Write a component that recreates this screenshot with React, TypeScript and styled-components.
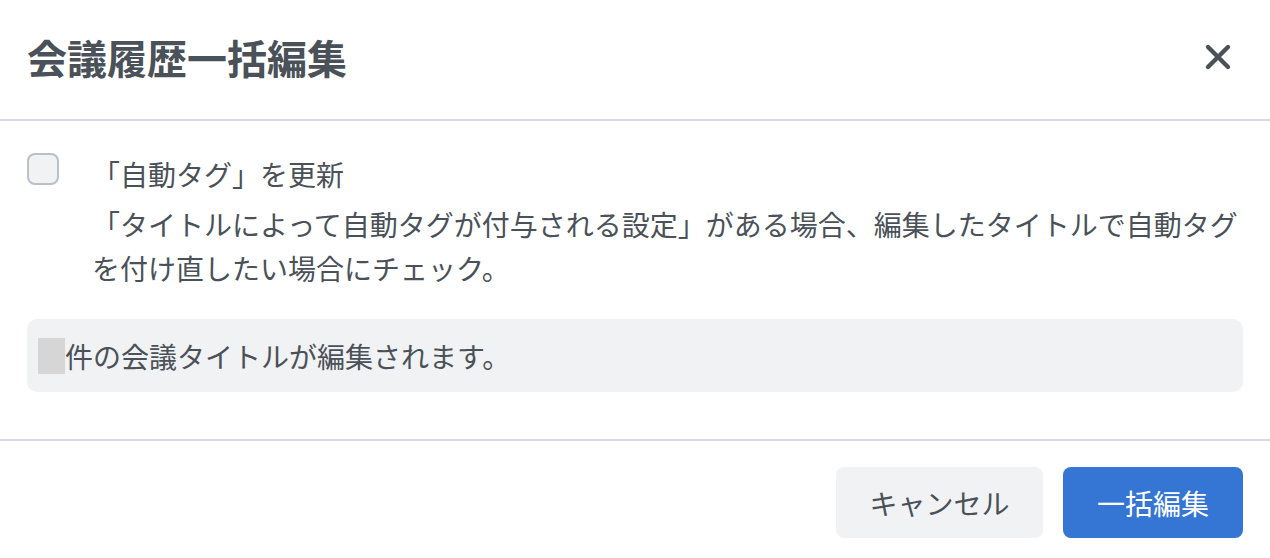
import React, { FunctionComponent, useState } from "react";
import styled, { createGlobalStyle } from "styled-components";

type TSProps = {
    count?: number | null
}

const BulkEditModal: FunctionComponent<TSProps> = (props) => {
    const [checked, setChecked] = useState(false);

    return (
        <Modal>
            <Header>
                <Title>会議履歴一括編集</Title>
                <Close aria-label="close">
                    <svg width="28" height="28" viewBox="0 0 28 28">
                        <path d="M4 4 L24 24 M24 4 L4 24" stroke="#4a5158" strokeWidth="4.4" strokeLinecap="round" />
                    </svg>
                </Close>
            </Header>
            <Body>
                <OptionRow>
                    <CheckBox $checked={checked} onClick={() => setChecked(!checked)} />
                    <OptionText>
                        <Label>「自動タグ」を更新</Label>
                        <Description>
                            「タイトルによって自動タグが付与される設定」がある場合、編集したタイトルで自動タグを付け直したい場合にチェック。
                        </Description>
                    </OptionText>
                </OptionRow>
                <Info>
                    <CountPlaceholder>{props.count ?? ''}</CountPlaceholder>
                    件の会議タイトルが編集されます。
                </Info>
            </Body>
            <Footer>
                <Button $variant="secondary">キャンセル</Button>
                <Button $variant="primary">一括編集</Button>
            </Footer>
        </Modal>
    )
}

export default function App() {
    return (
        <>
            <GlobalStyle />
            <BulkEditModal />
        </>
    )
}

// STYLED COMPONENTS //
const GlobalStyle = createGlobalStyle`
    html, body {
        margin: 0;
        padding: 0;
        background: #fff;
    }
    body {
        font-family: "Noto Sans CJK JP", "Noto Sans", sans-serif;
        color: #4a5158;
    }
`;
const Modal = styled.div({
    width: 1270,
    height: 558,
    background: '#fff',
    display: 'flex',
    flexDirection: 'column',
    boxSizing: 'border-box',
});
const Header = styled.div({
    height: 121,
    boxSizing: 'border-box',
    padding: '0 38px 6px 27px',
    display: 'flex',
    alignItems: 'center',
    justifyContent: 'space-between',
    borderBottom: '2px solid #d7dade',
});
const Title = styled.h1({
    margin: 0,
    fontSize: 40,
    fontWeight: 700,
    lineHeight: '48px',
    color: '#4a5158',
});
const Close = styled.button({
    border: 'none',
    background: 'none',
    padding: 0,
    width: 28,
    height: 28,
    display: 'flex',
    alignItems: 'center',
    justifyContent: 'center',
    cursor: 'pointer',
});
const Body = styled.div({
    padding: '31px 27px 47px',
    display: 'flex',
    flexDirection: 'column',
    borderBottom: '2px solid #d7dade',
});
const OptionRow = styled.div({
    display: 'flex',
    alignItems: 'flex-start',
    gap: 33,
});
const CheckBox = styled.div<{ $checked: boolean }>((props) => ({
    width: 32,
    height: 32,
    boxSizing: 'border-box',
    flexShrink: 0,
    marginTop: 1,
    borderRadius: 8,
    border: '2px solid ' + (props.$checked ? '#3575d3' : '#b9c0c7'),
    background: props.$checked ? '#3575d3' : '#f1f2f4',
    cursor: 'pointer',
}));
const OptionText = styled.div({
    display: 'flex',
    flexDirection: 'column',
    flex: 1,
});
const Label = styled.div({
    fontSize: 28,
    lineHeight: '44px',
    marginBottom: 6,
});
const Description = styled.div({
    fontSize: 28,
    lineHeight: '44px',
});
const Info = styled.div({
    marginTop: 29,
    height: 73,
    boxSizing: 'border-box',
    padding: '0 11px',
    borderRadius: 10,
    background: '#f1f2f4',
    display: 'flex',
    alignItems: 'center',
    fontSize: 28,
});
const CountPlaceholder = styled.span({
    display: 'inline-block',
    minWidth: 27,
    height: 36,
    background: '#d6d6d6',
});
const Footer = styled.div({
    flex: 1,
    display: 'flex',
    justifyContent: 'flex-end',
    alignItems: 'flex-start',
    gap: 20,
    padding: '26px 27px 0',
});
const Button = styled.button<{ $variant: 'primary' | 'secondary' }>((props) => ({
    height: 71,
    width: props.$variant === 'primary' ? 180 : 207,
    padding: 0,
    border: 'none',
    borderRadius: 8,
    fontFamily: 'inherit',
    fontSize: 28,
    background: props.$variant === 'primary' ? '#3575d3' : '#f1f2f4',
    color: props.$variant === 'primary' ? '#fff' : '#4a5158',
    cursor: 'pointer',
}));
